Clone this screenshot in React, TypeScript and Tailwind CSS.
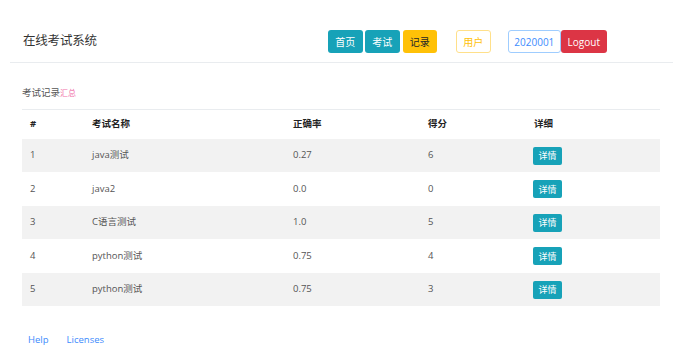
const rows = [
  { id: 1, name: "java测试", rate: "0.27", score: "6" },
  { id: 2, name: "java2", rate: "0.0", score: "0" },
  { id: 3, name: "C语言测试", rate: "1.0", score: "5" },
  { id: 4, name: "python测试", rate: "0.75", score: "4" },
  { id: 5, name: "python测试", rate: "0.75", score: "3" },
];

export default function App() {
  return (
    <div
      className="w-[679px] h-[346px] bg-white text-[#212529] overflow-hidden"
      style={{ fontFamily: '"Open Sans", "Noto Sans CJK SC", sans-serif' }}
    >
      {/* navbar */}
      <header className="mx-[10px] w-[663px] h-[63px] flex items-center border-b border-[#e9ecef] pl-[13px] pt-[21px]">
        <div className="text-[12.5px] text-[#333] tracking-[-0.2px]">在线考试系统</div>
        <div className="ml-[231px] flex items-center text-[10px] leading-none">
          <button className="h-[23px] w-[35px] rounded-[3px] bg-[#17a2b8] text-white">首页</button>
          <button className="ml-[2px] h-[23px] w-[35px] rounded-[3px] bg-[#17a2b8] text-white">考试</button>
          <button className="ml-[3px] h-[23px] w-[34px] rounded-[3px] bg-[#ffc107] text-[#212529]">记录</button>
          <button className="ml-[19px] h-[23px] w-[35px] rounded-[3px] border border-[#ffe08a] text-[#ffc107] bg-white">用户</button>
          <button className="ml-[17px] h-[23px] w-[53px] rounded-[3px] border border-[#9fcdff] text-[#3d8bfd] bg-white">2020001</button>
          <button className="h-[23px] w-[46px] rounded-[3px] bg-[#dc3545] text-white">Logout</button>
        </div>
      </header>

      <div className="pl-[22px] w-[660px]">
        <div className="mt-[24px] text-[9.5px] leading-[12px] text-[#555]">
          考试记录<span className="text-[#f06fa9] text-[8px]">汇总</span>
        </div>
        <table className="mt-[10px] w-[638px] border-collapse text-[9.5px] table-fixed">
          <colgroup>
            <col className="w-[62px]" />
            <col className="w-[201px]" />
            <col className="w-[135px]" />
            <col className="w-[106px]" />
            <col className="w-[134px]" />
          </colgroup>
          <thead>
            <tr className="h-[29px] border-t border-[#e9ecef] text-left font-bold text-[#222]">
              <th className="pl-[8px]">#</th>
              <th className="pl-[8px]">考试名称</th>
              <th className="pl-[8px]">正确率</th>
              <th className="pl-[8px]">得分</th>
              <th className="pl-[8px]">详细</th>
            </tr>
          </thead>
          <tbody className="text-[#555]">
            {rows.map((r, i) => (
              <tr key={r.id} className={`h-[33.5px] ${i % 2 === 0 ? "bg-[#f2f2f2]" : "bg-white"}`}>
                <td className="pl-[8px]">{r.id}</td>
                <td className="pl-[8px]">{r.name}</td>
                <td className="pl-[8px]">{r.rate}</td>
                <td className="pl-[8px]">{r.score}</td>
                <td className="pl-[7px]">
                  <button className="mt-[1px] h-[18px] w-[29px] rounded-[2px] bg-[#17a2b8] text-white text-[9px] leading-none">
                    详情
                  </button>
                </td>
              </tr>
            ))}
          </tbody>
        </table>
        <div className="mt-[27px] pl-[6px] flex gap-[18px] text-[9.5px] text-[#3d8bfd]">
          <span>Help</span>
          <span>Licenses</span>
        </div>
      </div>
    </div>
  );
}
